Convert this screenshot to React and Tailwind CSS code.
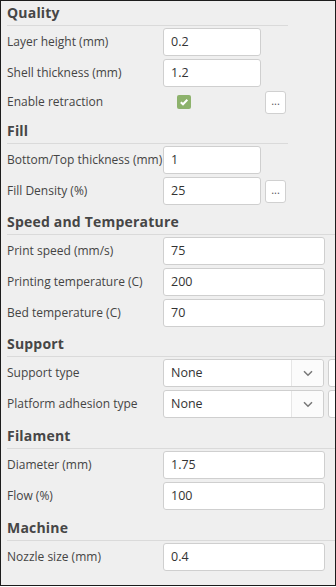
import React from 'react';

const sections = [
  {
    title: 'Quality',
    narrow: true,
    rows: [
      { label: 'Layer height (mm)', type: 'input', value: '0.2' },
      { label: 'Shell thickness (mm)', type: 'input', value: '1.2' },
      { label: 'Enable retraction', type: 'check', more: true },
    ],
  },
  {
    title: 'Fill',
    narrow: true,
    rows: [
      { label: 'Bottom/Top thickness (mm)', type: 'input', value: '1' },
      { label: 'Fill Density (%)', type: 'input', value: '25', more: true },
    ],
  },
  {
    title: 'Speed and Temperature',
    rows: [
      { label: 'Print speed (mm/s)', type: 'input', value: '75' },
      { label: 'Printing temperature (C)', type: 'input', value: '200' },
      { label: 'Bed temperature (C)', type: 'input', value: '70' },
    ],
  },
  {
    title: 'Support',
    rows: [
      { label: 'Support type', type: 'select', value: 'None' },
      { label: 'Platform adhesion type', type: 'select', value: 'None' },
    ],
  },
  {
    title: 'Filament',
    extra: 'mt-[1px]',
    rows: [
      { label: 'Diameter (mm)', type: 'input', value: '1.75' },
      { label: 'Flow (%)', type: 'input', value: '100' },
    ],
  },
  {
    title: 'Machine',
    extra: 'mt-[1px]',
    rows: [{ label: 'Nozzle size (mm)', type: 'input', value: '0.4' }],
  },
];

function MoreButton() {
  return (
    <button className="ml-[4px] w-[21px] h-[23px] bg-white border border-[#d0d0d0] rounded-[3px] text-[11px] leading-none text-[#555] flex items-center justify-center pb-[3px]">
      ...
    </button>
  );
}

function Field({ row, narrow }) {
  if (row.type === 'check') {
    return (
      <div className="flex items-center h-[24px]">
        <div className="w-[98px] flex items-center">
          <span className="ml-[14px] w-[14px] h-[14px] rounded-[2px] bg-[#8db26c] flex items-center justify-center">
            <svg width="10" height="10" viewBox="0 0 10 10">
              <path d="M1.8 5.2 L4 7.3 L8.3 2.8" fill="none" stroke="#fff" strokeWidth="2" />
            </svg>
          </span>
        </div>
        {row.more && <MoreButton />}
      </div>
    );
  }
  if (row.type === 'select') {
    return (
      <div className="flex items-center">
        <div className="w-[161px] h-[28px] bg-white border border-[#cfcfcf] rounded-[3px] flex">
          <span className="flex-1 pl-[7px] flex items-center text-[12.5px] text-[#333]">{row.value}</span>
          <span className="w-[32px] border-l border-[#e6e6e6] bg-[#fbfbfb] rounded-r-[3px] flex items-center justify-center">
            <svg width="10" height="7" viewBox="0 0 10 7">
              <path d="M1 1.3 L5 5.2 L9 1.3" fill="none" stroke="#777" strokeWidth="1.5" />
            </svg>
          </span>
        </div>
        <div className="ml-[4px] w-[24px] h-[28px] shrink-0 bg-white border border-[#cfcfcf] rounded-[3px]" />
      </div>
    );
  }
  return (
    <div className="flex items-center">
      <div
        className={`${narrow ? 'w-[98px]' : 'w-[162px]'} h-[28px] bg-white border border-[#cfcfcf] rounded-[3px] pl-[7px] flex items-center text-[12.5px] text-[#333]`}
      >
        {row.value}
      </div>
      {row.more && <MoreButton />}
    </div>
  );
}

export default function App() {
  return (
    <div
      className="w-[336px] h-[586px] bg-[#efefef] border border-[#1c1c1c] overflow-hidden pl-[6px] text-[#444]"
      style={{ fontFamily: '"Open Sans", "Noto Sans", sans-serif' }}
    >
      <div className="flex flex-col gap-[5px] w-[360px]">
        {sections.map(s => (
          <div key={s.title} className={`flex flex-col ${s.extra || ''}`}>
            <div
              className={`${s.narrow ? 'w-[281px]' : 'w-[329px]'} border-b border-[#dadada] pt-[2px] pb-[3px] text-[14px] leading-[19px] font-bold text-[#464646] tracking-[0.2px]`}
            >
              {s.title}
            </div>
            <div className="flex flex-col gap-[3px] pt-[2px]">
              {s.rows.map(r => (
                <div key={r.label} className="flex items-center">
                  <div className="w-[156px] shrink-0 text-[12px] text-[#444] whitespace-nowrap">{r.label}</div>
                  <Field row={r} narrow={s.narrow} />
                </div>
              ))}
            </div>
          </div>
        ))}
      </div>
    </div>
  );
}
